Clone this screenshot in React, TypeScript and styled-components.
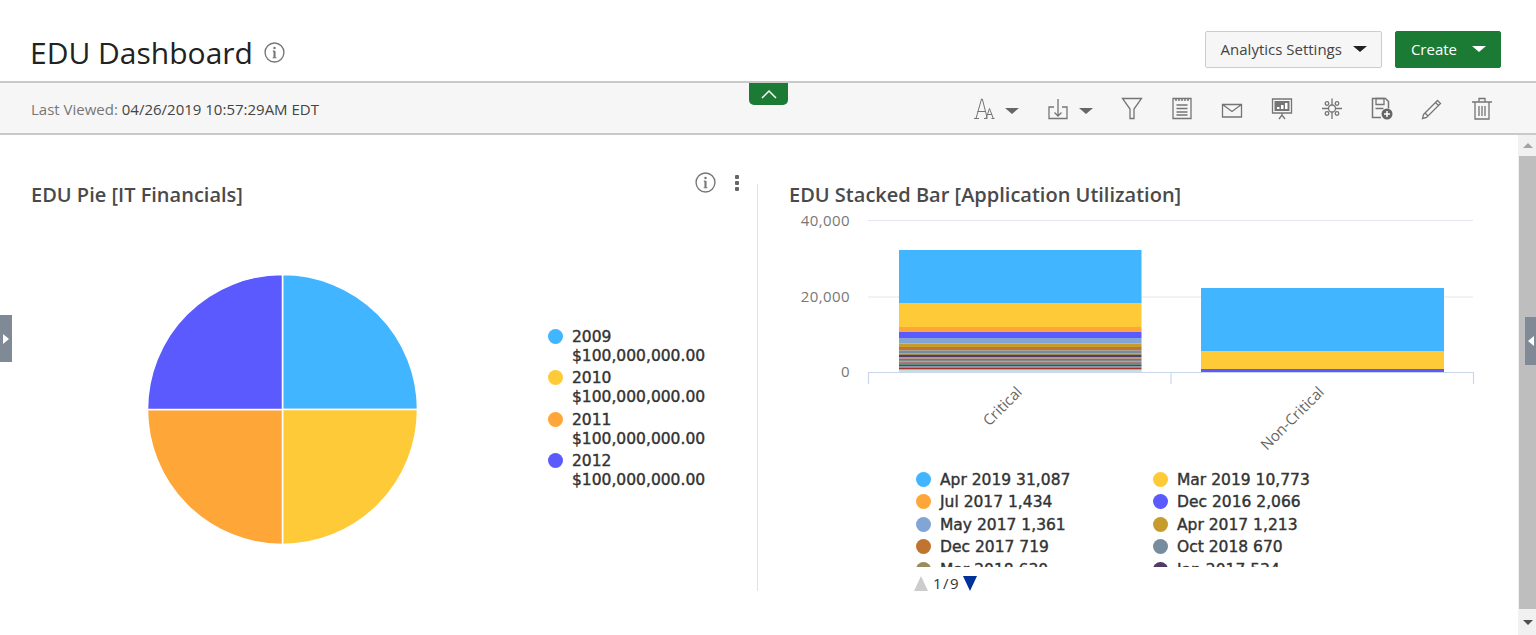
import React from 'react';
import styled, { createGlobalStyle } from 'styled-components';

const GlobalStyle = createGlobalStyle`
  html, body {
    margin: 0;
    padding: 0;
    height: 100%;
    overflow: hidden;
    background: #fff;
    font-family: "Open Sans", "Liberation Sans", sans-serif;
  }
  * { box-sizing: border-box; }
`;

const Page = styled.div`
  position: relative;
  display: flex;
  flex-direction: column;
  width: 1536px;
  height: 635px;
  overflow: hidden;
`;

const Header = styled.header`
  display: flex;
  justify-content: space-between;
  align-items: flex-start;
  height: 83px;
  padding: 31px 35px 0 30px;
  border-bottom: 2px solid #c9c9c9;
`;

const TitleRow = styled.div`
  display: flex;
  align-items: center;
  gap: 11px;
  height: 43px;
`;

const Title = styled.h1`
  margin: 0;
  font-size: 30px;
  font-weight: 400;
  line-height: 43px;
  color: #222;
`;

const Actions = styled.div`
  display: flex;
  gap: 13px;
`;

const Button = styled.button<{ $primary?: boolean }>`
  display: flex;
  align-items: center;
  height: 37px;
  padding: 0 14px 2px 15px;
  gap: ${({ $primary }) => ($primary ? '15px' : '11px')};
  font-family: inherit;
  font-size: 15px;
  border-radius: 2px;
  color: ${({ $primary }) => ($primary ? '#fff' : '#444')};
  background: ${({ $primary }) => ($primary ? '#1b7a34' : '#f6f6f6')};
  border: 1px solid ${({ $primary }) => ($primary ? '#1b7a34' : '#ccc')};
`;

const Caret = styled.span<{ $color: string }>`
  width: 0;
  height: 0;
  border-left: 7px solid transparent;
  border-right: 7px solid transparent;
  border-top: 6px solid ${({ $color }) => $color};
`;

const ToolCaret = styled(Caret)`
  margin-top: 6px;
`;

const Toolbar = styled.div`
  display: flex;
  justify-content: space-between;
  align-items: center;
  height: 52px;
  padding: 0 42px 0 31px;
  background: #f6f6f6;
  border-bottom: 2px solid #c9c9c9;
`;

const LastViewed = styled.div`
  padding-top: 2px;
  font-size: 15px;
  color: #777;
  span { color: #444; }
`;

const Tools = styled.div`
  display: flex;
  align-items: center;
  gap: 26px;
`;

const ToolGroup = styled.div`
  display: flex;
  align-items: center;
  gap: 9px;
  margin-right: 1px;
`;

const CollapseTab = styled.div`
  position: absolute;
  left: 749px;
  top: 83px;
  width: 39px;
  height: 22px;
  display: flex;
  align-items: center;
  justify-content: center;
  background: #1b7a34;
  border-radius: 0 0 5px 5px;
`;

const Body = styled.div`
  flex: 1;
  display: flex;
  min-height: 0;
`;

const Content = styled.main`
  flex: 1;
  display: grid;
  grid-template-columns: 758px 1fr;
  align-items: start;
  padding-top: 49px;
`;

const Panel = styled.section<{ $divider?: boolean }>`
  position: relative;
  height: 407px;
  padding-left: 31px;
  border-right: ${({ $divider }) => ($divider ? '1px solid #e2e2e2' : 'none')};
`;

const PanelTitle = styled.h2`
  margin: 0;
  font-size: 20px;
  font-weight: 600;
  line-height: 22px;
  color: #4a4a4a;
`;

const PanelTools = styled.div`
  position: absolute;
  top: -12px;
  right: 18px;
  display: flex;
  align-items: center;
  gap: 19px;
`;

const PieRow = styled.div`
  display: flex;
  align-items: flex-start;
`;

const PieBox = styled.div`
  margin: 67.5px 0 0 115.5px;
  width: 271px;
  height: 271px;
`;

const PieLegend = styled.ul`
  list-style: none;
  margin: 121px 0 0 130.5px;
  padding: 0;
`;

const PieLegendItem = styled.li`
  display: flex;
  gap: 9px;
  height: 41.3px;
`;

const LegendLabel = styled.div`
  padding-top: 1px;
  font-family: "DejaVu Sans", sans-serif;
  font-size: 15.5px;
  line-height: 19px;
  -webkit-text-stroke: 0.4px #333;
  color: #333;
  white-space: nowrap;
`;

const Dot = styled.span<{ $color: string }>`
  flex: none;
  width: 15px;
  height: 15px;
  margin-top: 2px;
  border-radius: 50%;
  background: ${({ $color }) => $color};
`;

const LegendBox = styled.div`
  margin-left: 127px;
  width: 480px;
  height: 97px;
  overflow: hidden;
  display: grid;
  grid-template-columns: 237px 1fr;
  grid-auto-rows: 22.4px;
`;

const LegendItem = styled.div`
  display: flex;
  gap: 9px;
`;

const Pager = styled.div`
  display: flex;
  align-items: center;
  gap: 5px;
  margin: 8px 0 0 125px;
  height: 16px;
  font-size: 15px;
  letter-spacing: 1.5px;
  color: #333;
`;

const Triangle = styled.span<{ $color: string; $down?: boolean }>`
  width: 0;
  height: 0;
  border-left: 7.5px solid transparent;
  border-right: 7.5px solid transparent;
  ${({ $down, $color }) =>
    $down ? `margin-left: -2px; border-top: 15px solid ${$color};` : `border-bottom: 15px solid ${$color};`}
`;

const Scrollbar = styled.aside`
  flex: none;
  width: 18px;
  display: flex;
  flex-direction: column;
  background: #f1f1f1;
  padding-left: 1px;
`;

const ScrollEnd = styled.div<{ $down?: boolean }>`
  flex: none;
  height: ${({ $down }) => ($down ? '26px' : '21px')};
  display: flex;
  align-items: center;
  justify-content: center;
  &::after {
    content: '';
    border-left: 5px solid transparent;
    border-right: 5px solid transparent;
    ${({ $down }) => ($down ? 'border-top: 5px solid #505050;' : 'border-bottom: 5px solid #a3a3a3;')}
  }
`;

const ScrollThumb = styled.div`
  flex: none;
  height: 453px;
  background: #bebebe;
`;

const SideTab = styled.div<{ $side: 'left' | 'right' }>`
  position: absolute;
  ${({ $side }) =>
    $side === 'left' ? 'left: 0; top: 315px; width: 12px; height: 47px;' : 'right: 0; top: 317px; width: 11px; height: 48px;'}
  display: flex;
  align-items: center;
  justify-content: center;
  background: #7f8a96;
  &::after {
    content: '';
    border-top: 5px solid transparent;
    border-bottom: 5px solid transparent;
    ${({ $side }) => ($side === 'left' ? 'border-left: 6px solid #fff;' : 'border-right: 6px solid #fff;')}
  }
`;

const InfoIcon = ({ size }: { size: number }) => (
  <svg width={size} height={size} viewBox="0 0 20 20" fill="none" stroke="#777">
    <circle cx="10" cy="10" r="9" strokeWidth="1.3" />
    <circle cx="10" cy="5.8" r="1.2" fill="#777" stroke="none" />
    <path d="M10 8.5v6.5" strokeWidth="2" />
    <path d="M8.4 8.7h1.6M8.2 15h3.6" strokeWidth="1" />
  </svg>
);

const Tool = ({ children }: { children: React.ReactNode }) => (
  <svg width="24" height="24" viewBox="0 0 24 24" fill="none" stroke="#757575" strokeWidth="1.3">
    {children}
  </svg>
);

const pieData = [
  { label: '2009', color: '#41b5ff', path: 'M135.5 135.5V.5A135 135 0 0 1 270.5 135.5Z' },
  { label: '2010', color: '#ffca38', path: 'M135.5 135.5H270.5A135 135 0 0 1 135.5 270.5Z' },
  { label: '2011', color: '#ffa638', path: 'M135.5 135.5V270.5A135 135 0 0 1 .5 135.5Z' },
  { label: '2012', color: '#5a5aff', path: 'M135.5 135.5H.5A135 135 0 0 1 135.5 .5Z' },
];

const legendData = [
  ['Apr 2019 31,087', '#41b5ff'],
  ['Mar 2019 10,773', '#ffca38'],
  ['Jul 2017 1,434', '#ffa638'],
  ['Dec 2016 2,066', '#5a5aff'],
  ['May 2017 1,361', '#83a5d6'],
  ['Apr 2017 1,213', '#c69c2c'],
  ['Dec 2017 719', '#bf7530'],
  ['Oct 2018 670', '#778d9e'],
  ['Mar 2018 630', '#9a8b58'],
  ['Jan 2017 534', '#513c68'],
];

// top y, height, colour of each slice of the first bar
const criticalBands: [number, number, string][] = [
  [250, 53, '#41b5ff'],
  [303, 24, '#ffca38'],
  [327, 5, '#ffa638'],
  [332, 6, '#5a5aff'],
  [338, 5.5, '#83a5d6'],
  [343.5, 3.5, '#c69c2c'],
  [347, 3.5, '#bf7530'],
  [350.5, 3, '#778d9e'],
  [353.5, 1.5, '#9a8b58'],
  [355, 2, '#513c68'],
  [357, 1.5, '#a9a07a'],
  [358.5, 1.5, '#a0606a'],
  [360, 1.5, '#7f8f86'],
  [361.5, 1.5, '#a87a80'],
  [363, 2, '#5f9080'],
  [365, 1.5, '#2f5560'],
  [366.5, 1.5, '#8d88b0'],
  [368, 1, '#a8302c'],
  [369, 1.5, '#7cc0b8'],
  [370.5, 1.5, '#c4e0e0'],
];

const Bars = () => (
  <svg width="700" height="262" viewBox="789 208 700 262" style={{ display: 'block', marginTop: 2 }}>
    <path d="M868 220.5H1473M868 297H1473" fill="none" stroke="#e6e6ee" />
    <g fontFamily="Open Sans" fontSize="15" letterSpacing="0.4" fill="#777" textAnchor="end">
      <text x="850" y="226">40,000</text>
      <text x="850" y="302">20,000</text>
      <text x="850" y="377">0</text>
    </g>
    {criticalBands.map(([y, h, c]) => (
      <rect key={y} x="899" y={y} width="242.5" height={h} fill={c} />
    ))}
    <rect x="1201" y="288" width="243" height="63" fill="#41b5ff" />
    <rect x="1201" y="351" width="243" height="18" fill="#ffca38" />
    <rect x="1201" y="369" width="243" height="3" fill="#5a5aff" />
    <path d="M868.5 384V372.5H1473.5V384M1171 372.5V384" fill="none" stroke="#ccd6eb" strokeWidth="1.2" />
    <g fontFamily="Open Sans" fontSize="15" fill="#666" textAnchor="end">
      <text transform="translate(1023 393) rotate(-45)">Critical</text>
      <text transform="translate(1325 393) rotate(-45)">Non-Critical</text>
    </g>
  </svg>
);

const App: React.FC = () => (
  <Page>
    <GlobalStyle />
    <Header>
      <TitleRow>
        <Title>EDU Dashboard</Title>
        <InfoIcon size={21} />
      </TitleRow>
      <Actions>
        <Button>
          Analytics Settings
          <Caret $color="#222" />
        </Button>
        <Button $primary>
          Create
          <Caret $color="#fff" />
        </Button>
      </Actions>
    </Header>
    <Toolbar>
      <LastViewed>
        Last Viewed: <span>04/26/2019 10:57:29AM EDT</span>
      </LastViewed>
      <Tools>
        <ToolGroup>
          <Tool>
            <path d="M2 22.5h5M4 22.5 9.5 3h.8l5 19.5M5.5 15.5h8.5M12 22.5h3M14 22.5l3.5-10 3.8 10M19.5 22.5h3M15.3 18.5h4.6" strokeWidth="1" />
          </Tool>
          <ToolCaret $color="#666" />
        </ToolGroup>
        <ToolGroup>
          <Tool>
            <path d="M8 11H3v11.5h18V11h-5M12 3v17M8.5 16.5l3.5 3.5 3.5-3.5" />
          </Tool>
          <ToolCaret $color="#666" />
        </ToolGroup>
        <Tool>
          <path d="M2.5 2.5h19L14 13v9.5h-4V13Z" />
        </Tool>
        <Tool>
          <path d="M3 2.5h18v20H3ZM6.5 9h11M6.5 12.5h11M6.5 16h11M6.5 19h11" />
          <path d="M6 2.5V5M9 2.5V5M12 2.5V5M15 2.5V5M18 2.5V5" strokeWidth="1.5" />
        </Tool>
        <Tool>
          <path d="M2.5 8.5h19V21h-19ZM2.5 8.5l9.5 7 9.5-7" />
        </Tool>
        <Tool>
          <path d="M2.5 3h19v14h-19Z" />
          <path d="M4.5 5h15v10h-15Z" fill="#757575" stroke="none" />
          <path d="M7 13h2.5v-2H7ZM11 13h2.5V9H11ZM15 13h2.5V7H15Z" fill="#fff" stroke="none" />
          <path d="M12 17v2M9 23l3-4 3 4" />
        </Tool>
        <Tool>
          <circle cx="12" cy="12.5" r="3.5" />
          <path d="M12 2.5V9M12 16v7M2 12.5h6.5M15.5 12.5H22" />
          <circle cx="7" cy="7.5" r="1.8" />
          <circle cx="17" cy="7.5" r="1.8" />
          <circle cx="7" cy="17.5" r="1.8" />
          <circle cx="17" cy="17.5" r="1.8" />
        </Tool>
        <Tool>
          <path d="M11 21.5H2.5v-19h13l3 3v7" strokeWidth="1.5" />
          <path d="M6 2.5h8v6H6ZM5.5 12.5h8" />
          <circle cx="17" cy="18" r="5.5" fill="#666" stroke="none" />
          <path d="M14 18h6M17 15v6" stroke="#fff" strokeWidth="1.5" />
        </Tool>
        <Tool>
          <path d="M3.5 18.5 17.5 4.5l3 3-14 14-4 1ZM15.5 6.5l3 3M5 17l3 3" />
        </Tool>
        <Tool>
          <path d="M2 6h20M5 6v17h14V6M9 6V2.5h6V6" />
          <path d="M9 10v10M12 10v10M15 10v10" />
        </Tool>
      </Tools>
    </Toolbar>
    <CollapseTab>
      <svg width="18" height="10" viewBox="0 0 18 10" fill="none" stroke="#fff" strokeWidth="1.5">
        <path d="M2 9 9 2l7 7" />
      </svg>
    </CollapseTab>
    <Body>
      <Content>
        <Panel $divider>
          <PanelTitle>EDU Pie [IT Financials]</PanelTitle>
          <PanelTools>
            <InfoIcon size={21} />
            <svg width="4" height="16" viewBox="0 0 4 16" fill="#666">
              <rect y="0" width="4" height="4" rx="1" />
              <rect y="6" width="4" height="4" rx="1" />
              <rect y="12" width="4" height="4" rx="1" />
            </svg>
          </PanelTools>
          <PieRow>
            <PieBox>
              <svg width="271" height="271" viewBox="0 0 271 271">
                {pieData.map((p) => (
                  <path key={p.label} d={p.path} fill={p.color} stroke="#fff" strokeWidth="1.5" />
                ))}
              </svg>
            </PieBox>
            <PieLegend>
              {pieData.map((p) => (
                <PieLegendItem key={p.label}>
                  <Dot $color={p.color} />
                  <LegendLabel>
                    {p.label}
                    <br />
                    $100,000,000.00
                  </LegendLabel>
                </PieLegendItem>
              ))}
            </PieLegend>
          </PieRow>
        </Panel>
        <Panel>
          <PanelTitle>EDU Stacked Bar [Application Utilization]</PanelTitle>
          <Bars />
          <LegendBox>
            {legendData.map(([label, color]) => (
              <LegendItem key={label}>
                <Dot $color={color} />
                <LegendLabel>{label}</LegendLabel>
              </LegendItem>
            ))}
          </LegendBox>
          <Pager>
            <Triangle $color="#cccccc" />
            1/9
            <Triangle $color="#003399" $down />
          </Pager>
        </Panel>
      </Content>
      <Scrollbar>
        <ScrollEnd />
        <ScrollThumb />
        <ScrollEnd $down />
      </Scrollbar>
    </Body>
    <SideTab $side="left" />
    <SideTab $side="right" />
  </Page>
);

export default App;
